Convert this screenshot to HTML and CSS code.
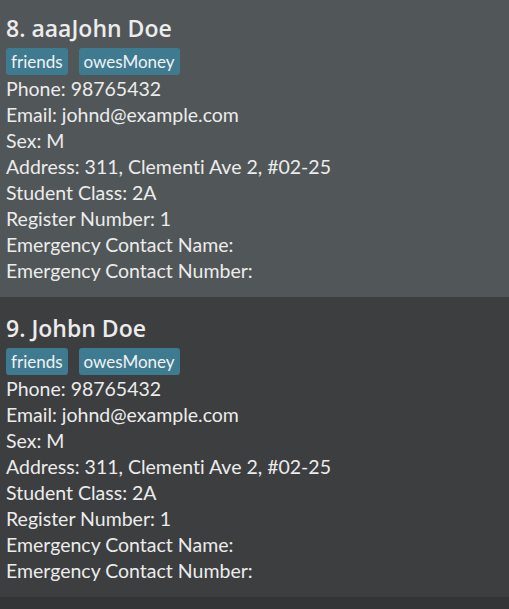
FILE: index.html
```html
<!DOCTYPE html>
<html>
<head>
<meta charset="utf-8">
<link rel="stylesheet" href="styles.css">
</head>
<body>
<div class="list">
  <div class="card card-odd">
    <div class="title">8. aaaJohn Doe</div>
    <div class="tags"><span class="tag">friends</span><span class="tag">owesMoney</span></div>
    <div class="line">Phone: 98765432</div>
    <div class="line">Email: johnd@example.com</div>
    <div class="line">Sex: M</div>
    <div class="line">Address: 311, Clementi Ave 2, #02-25</div>
    <div class="line">Student Class: 2A</div>
    <div class="line">Register Number: 1</div>
    <div class="line">Emergency Contact Name: </div>
    <div class="line">Emergency Contact Number: </div>
  </div>
  <div class="card card-even">
    <div class="title">9. Johbn Doe</div>
    <div class="tags"><span class="tag">friends</span><span class="tag">owesMoney</span></div>
    <div class="line">Phone: 98765432</div>
    <div class="line">Email: johnd@example.com</div>
    <div class="line">Sex: M</div>
    <div class="line">Address: 311, Clementi Ave 2, #02-25</div>
    <div class="line">Student Class: 2A</div>
    <div class="line">Register Number: 1</div>
    <div class="line">Emergency Contact Name: </div>
    <div class="line">Emergency Contact Number: </div>
  </div>
</div>
</body>
</html>
```
FILE: styles.css
```css
html, body {
  margin: 0;
  padding: 0;
  background: #343536;
  height: 100%;
  overflow: hidden;
}
body {
  font-family: "Lato", "Open Sans", sans-serif;
  font-variant-ligatures: none;
  color: #ececec;
}
.list {
  display: flex;
  flex-direction: column;
  margin-top: -3px;
}
.card {
  height: 300px;
  box-sizing: border-box;
  padding: 16px 6px 13px 6px;
}
.card-odd { background: #515658; }
.card-even { background: #3c3e3f; }
.title {
  font-family: "Open Sans", sans-serif;
  font-size: 23px;
  font-weight: 600;
  line-height: 30px;
  margin-bottom: 5px;
}
.tags {
  display: flex;
  gap: 11px;
  margin-bottom: 1px;
}
.tag {
  background: #3e7b91;
  color: #f2f2f2;
  font-size: 17px;
  height: 27px;
  line-height: 27px;
  padding: 0 5px;
  border-radius: 3px;
}
.line {
  font-size: 19.5px;
  line-height: 26px;
  white-space: pre;
}
```
